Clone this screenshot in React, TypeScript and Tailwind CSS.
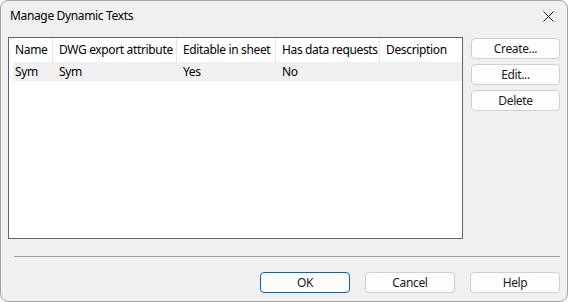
import React from "react";

const COLUMNS = [
  { label: "Name", width: "w-[44px]" },
  { label: "DWG export attribute", width: "w-[124px]" },
  { label: "Editable in sheet", width: "w-[99px]" },
  { label: "Has data requests", width: "w-[104px]" },
  { label: "Description", width: "flex-1" },
];

const ROWS = [["Sym", "Sym", "Yes", "No", ""]];

function DlgButton({ label, focused = false, wide = false }: { label: string; focused?: boolean; wide?: boolean }) {
  return (
    <button
      className={`${wide ? "w-[90px]" : "w-[89px]"} h-[21px] rounded-[4px] bg-[#fdfdfd] text-[12px] leading-none text-[#1a1a1a] ${
        focused ? "border border-[#0067c0]" : "border border-[#d0d0d0]"
      }`}
    >
      {label}
    </button>
  );
}

export default function App() {
  return (
    <div
      className="w-[568px] h-[302px] bg-[#f0f0f0] border border-[#a3a3a3] rounded-[8px] overflow-hidden flex flex-col text-[12px] text-black tracking-[-0.35px]"
      style={{ fontFamily: '"Noto Sans", "Open Sans", sans-serif' }}
    >
      {/* Title bar */}
      <div className="h-[36px] flex items-start justify-between pl-[9px] pr-[13px] pt-[7px]">
        <span className="text-[12px] leading-[16px]">Manage Dynamic Texts</span>
        <svg width="11" height="11" viewBox="0 0 11 11" className="mt-[3px]">
          <path d="M0.5 0.5 L10.5 10.5 M10.5 0.5 L0.5 10.5" stroke="#1a1a1a" strokeWidth="1" />
        </svg>
      </div>

      {/* Body */}
      <div className="flex pl-[7px] gap-[8px]">
        <div className="w-[455px] h-[202px] border border-[#646464] bg-white flex flex-col">
          <div className="h-[24px] flex">
            {COLUMNS.map((c, i) => (
              <div
                key={c.label}
                className={`${c.width} h-full flex items-center pl-[6px] whitespace-nowrap ${
                  i < COLUMNS.length - 1 ? "border-r border-[#e5e5e5]" : ""
                }`}
              >
                {c.label}
              </div>
            ))}
          </div>
          {ROWS.map((row, r) => (
            <div key={r} className="h-[19px] flex bg-[#f0f0f0] ml-[4px]">
              {row.map((cell, i) => (
                <div
                  key={i}
                  className={`${i === 0 ? "w-[40px] pl-[2px]" : COLUMNS[i].width + " pl-[6px]"} flex items-center whitespace-nowrap`}
                >
                  {cell}
                </div>
              ))}
            </div>
          ))}
        </div>
        <div className="flex flex-col gap-[5px] mt-px">
          <DlgButton label="Create..." />
          <DlgButton label="Edit..." />
          <DlgButton label="Delete" />
        </div>
      </div>

      {/* Separator */}
      <div className="mt-[17px] ml-[13px] mr-[7px] h-px bg-[#a0a0a0]" />

      {/* Footer */}
      <div className="flex justify-end gap-[15px] pr-[7px] mt-[15px]">
        <DlgButton label="OK" focused wide />
        <DlgButton label="Cancel" wide />
        <DlgButton label="Help" wide />
      </div>
    </div>
  );
}
